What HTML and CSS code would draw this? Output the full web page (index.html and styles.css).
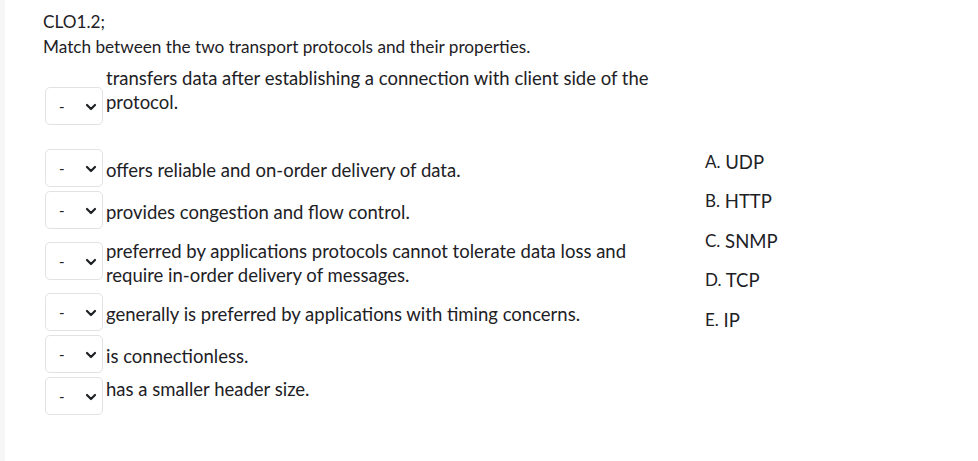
FILE: index.html
```html
<!DOCTYPE html>
<html lang="en">
<head>
  <meta charset="UTF-8">
  <title>CLO1.2 - Matching</title>
  <link rel="stylesheet" href="styles.css">
</head>
<body>
  <div class="page">
    <div class="qtext">
      <p>CLO1.2;</p>
      <p>Match between the two transport protocols and their properties.</p>
    </div>

    <div class="question">
      <div class="matches">
        <div class="row lead">
          <span class="pick">
            <select><option>-</option><option>A</option><option>B</option><option>C</option><option>D</option><option>E</option></select>
            <svg viewBox="0 0 10 6"><path d="M1 1l4 4 4-4"/></svg>
          </span>
          <div class="text">transfers data after establishing a connection with client side of the protocol.</div>
        </div>
        <div class="row">
          <span class="pick">
            <select><option>-</option><option>A</option><option>B</option><option>C</option><option>D</option><option>E</option></select>
            <svg viewBox="0 0 10 6"><path d="M1 1l4 4 4-4"/></svg>
          </span>
          <div class="text">offers reliable and on-order delivery of data.</div>
        </div>
        <div class="row">
          <span class="pick">
            <select><option>-</option><option>A</option><option>B</option><option>C</option><option>D</option><option>E</option></select>
            <svg viewBox="0 0 10 6"><path d="M1 1l4 4 4-4"/></svg>
          </span>
          <div class="text">provides congestion and flow control.</div>
        </div>
        <div class="row">
          <span class="pick">
            <select><option>-</option><option>A</option><option>B</option><option>C</option><option>D</option><option>E</option></select>
            <svg viewBox="0 0 10 6"><path d="M1 1l4 4 4-4"/></svg>
          </span>
          <div class="text">preferred by applications protocols cannot tolerate data loss and require in-order delivery of messages.</div>
        </div>
        <div class="row">
          <span class="pick">
            <select><option>-</option><option>A</option><option>B</option><option>C</option><option>D</option><option>E</option></select>
            <svg viewBox="0 0 10 6"><path d="M1 1l4 4 4-4"/></svg>
          </span>
          <div class="text">generally is preferred by applications with timing concerns.</div>
        </div>
        <div class="row">
          <span class="pick">
            <select><option>-</option><option>A</option><option>B</option><option>C</option><option>D</option><option>E</option></select>
            <svg viewBox="0 0 10 6"><path d="M1 1l4 4 4-4"/></svg>
          </span>
          <div class="text">is connectionless.</div>
        </div>
        <div class="row tail">
          <span class="pick">
            <select><option>-</option><option>A</option><option>B</option><option>C</option><option>D</option><option>E</option></select>
            <svg viewBox="0 0 10 6"><path d="M1 1l4 4 4-4"/></svg>
          </span>
          <div class="text">has a smaller header size.</div>
        </div>
      </div>

      <ul class="answers">
        <li><span class="lbl">A.</span> UDP</li>
        <li><span class="lbl">B.</span> HTTP</li>
        <li><span class="lbl">C.</span> SNMP</li>
        <li><span class="lbl">D.</span> TCP</li>
        <li><span class="lbl">E.</span> IP</li>
      </ul>
    </div>
  </div>
</body>
</html>
```
FILE: styles.css
```css
body {
  margin: 0;
  background: #fff;
  color: #1d2125;
  font-family: Lato, "Open Sans", sans-serif;
}

.page {
  min-height: 100vh;
  box-sizing: border-box;
  border-left: 5px solid #f6f6f6;
  padding: 9px 0 0 38px;
}

.qtext p {
  margin: 0;
  font-size: 17.2px;
  line-height: 25px;
}

.question {
  display: flex;
  align-items: center;
  margin-top: 5px;
}

.matches {
  margin-left: 2px;
}

.row {
  display: flex;
  align-items: center;
  padding: 2px 0;
}

.row.lead {
  align-items: flex-start;
  padding-bottom: 22px;
}

.row.lead .pick {
  margin-top: 21px;
}

.row.lead .text,
.row.tail .text {
  align-self: flex-start;
  padding: 0;
}

.pick {
  position: relative;
  flex: none;
  width: 58px;
  height: 38px;
}

.pick select {
  appearance: none;
  -webkit-appearance: none;
  width: 100%;
  height: 100%;
  margin: 0;
  padding: 0 0 0 13px;
  border: 1px solid #e2e2e2;
  border-radius: 5px;
  background: #fff;
  color: #1d2125;
  font-family: Lato, sans-serif;
  font-size: 15px;
}

.pick svg {
  position: absolute;
  right: 7px;
  top: 17px;
  width: 10px;
  height: 6px;
  overflow: visible;
  pointer-events: none;
}

.pick svg path {
  fill: none;
  stroke: #1d2125;
  stroke-width: 2.2;
  stroke-linecap: round;
  stroke-linejoin: round;
}

.text {
  width: 556px;
  margin-left: 3px;
  padding: 6px 0 2px;
  font-size: 18.5px;
  line-height: 24px;
}

.answers {
  list-style: none;
  margin: 0 0 0 43px;
  padding: 0;
  display: flex;
  flex-direction: column;
  gap: 15.5px;
  font-size: 18.5px;
  line-height: 24px;
}

.answers .lbl {
  font-size: 17px;
  vertical-align: 1px;
}
```
